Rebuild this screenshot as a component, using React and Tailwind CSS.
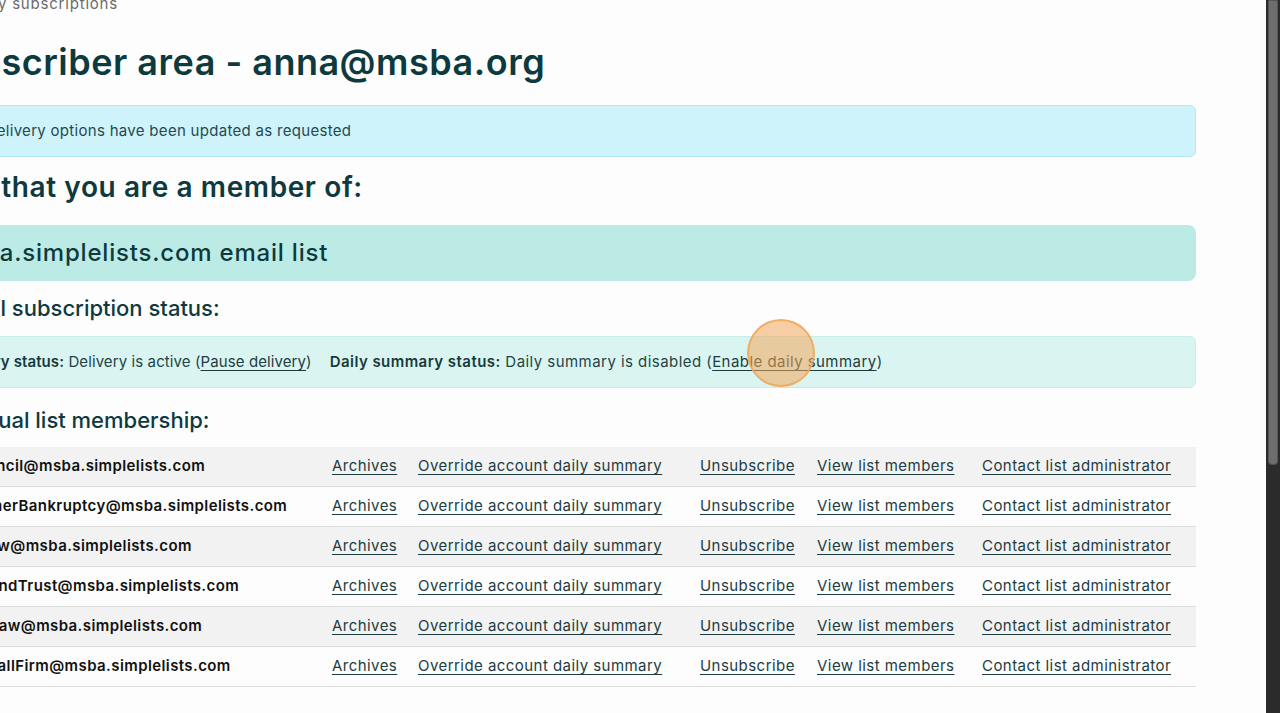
import React from "react";

const lists = [
  "BarCouncil@msba.simplelists.com",
  "ConsumerBankruptcy@msba.simplelists.com",
  "ElderLaw@msba.simplelists.com",
  "EstateAndTrust@msba.simplelists.com",
  "HealthLaw@msba.simplelists.com",
  "SoloSmallFirm@msba.simplelists.com",
];

const linkCls = "underline underline-offset-[3px] decoration-1 text-[#1d3c40]";

const App = () => {
  return (
    <div className="h-[713px] w-[1280px] overflow-hidden flex bg-[#fdfdfd] font-['Inter',sans-serif] text-[#173f42]">
      <div className="flex-1 overflow-hidden relative">
        <div className="ml-[-68px] w-[1264px]">
          <div className="mt-[-6px] h-5 flex items-center text-[15px] tracking-[0.8px] text-[#6b6b6b] ml-[-16px]">
            <span className="mr-2">Home</span>
            <span className="mr-2">/</span>
            <span>My subscriptions</span>
          </div>

          <h1 className="mt-[27px] text-[36px] leading-[43px] font-semibold tracking-[0.5px] text-[#0d3a3e]">
            Subscriber area - anna@msba.org
          </h1>

          <div className="mt-[21px] h-[52px] flex items-center px-4 rounded-md border border-[#b3e9f5] bg-[#cff3fb] text-[15px] tracking-[0.3px] text-[#1e4b50]">
            Your delivery options have been updated as requested
          </div>

          <h2 className="mt-[13px] ml-[-5px] text-[28px] leading-[34px] font-semibold tracking-[0.6px] text-[#0d3a3e]">
            Lists that you are a member of:
          </h2>

          <div className="mt-[21px] h-[56px] flex items-center px-4 rounded-lg bg-[#bcebe5] text-[24px] font-medium tracking-[0.8px] text-[#0d3a3e]">
            msba.simplelists.com email list
          </div>

          <h3 className="mt-[13px] h-[28px] flex items-center text-[22px] font-medium text-[#0d3a3e]">
            Overall subscription status:
          </h3>

          <div className="mt-[14px] h-[52px] flex items-center px-4 rounded-md border border-[#c9eee8] bg-[#daf5f1] text-[15px] text-[#1f4446]">
            <span className="mr-[18px] tracking-[0.1px]">
              <b className="font-semibold text-[#173a3c]">Delivery status:</b> Delivery is active (
              <a className={linkCls}>Pause delivery</a>)
            </span>
            <span className="tracking-[0.45px]">
              <b className="font-semibold text-[#173a3c]">Daily summary status:</b> Daily summary is disabled (
              <a className={linkCls}>Enable daily summary</a>)
            </span>
          </div>

          <h3 className="mt-[18px] ml-[-4px] h-[28px] flex items-center text-[22px] font-medium text-[#0d3a3e]">
            Individual list membership:
          </h3>

          <div className="mt-[13px]">
            {lists.map((l, i) => (
              <div
                key={l}
                className={`grid grid-cols-[400px_86px_282px_117px_165px_1fr] items-center h-[40px] border-b border-[#dcdcdc] text-[15px] tracking-[0.45px] ${
                  i % 2 === 0 ? "bg-[#f2f2f2]" : "bg-[#fdfdfd]"
                }`}
              >
                <span className="pl-2 font-semibold tracking-[0.4px] text-[#111]">{l}</span>
                <a className={linkCls}>Archives</a>
                <a className={linkCls}>Override account daily summary</a>
                <a className={linkCls}>Unsubscribe</a>
                <a className={linkCls}>View list members</a>
                <a className={linkCls}>Contact list administrator</a>
              </div>
            ))}
          </div>
        </div>

        <div className="absolute left-[747px] top-[319px] w-[68px] h-[68px] rounded-full bg-[#f2a65a]/55 border-2 border-[#f0a555]/80"></div>
      </div>

      <div className="w-[14px] h-full bg-[#2b2b2b] flex justify-center">
        <div className="w-[10px] h-[465px] bg-[#6e6e6e] border border-[#555] rounded-b-[4px]"></div>
      </div>
    </div>
  );
};

export default App;
